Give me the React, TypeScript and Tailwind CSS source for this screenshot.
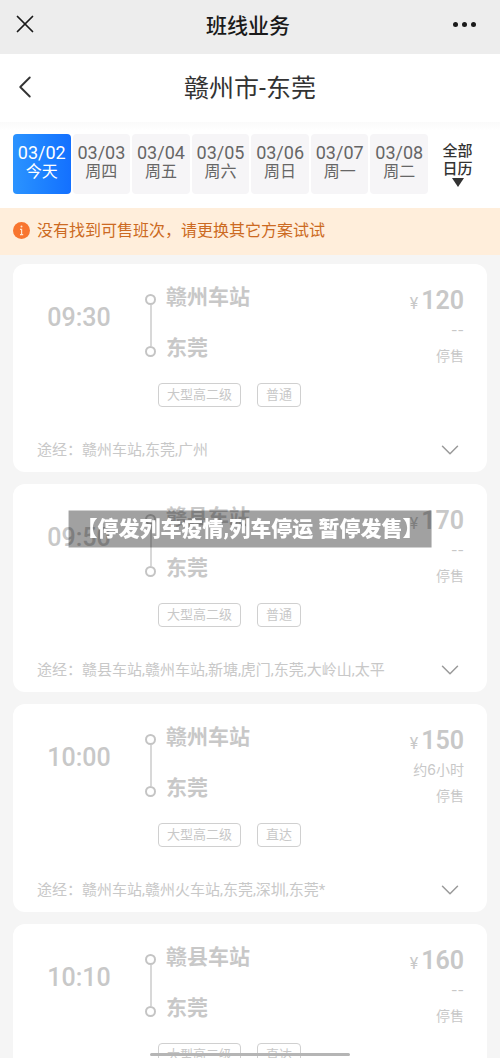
import { ChevronDown, ChevronLeft, X } from 'lucide-react';

type Trip = {
  time: string;
  from: string;
  to: string;
  price: number;
  duration: string;
  tags: string[];
  via: string;
};

const days = [
  { date: '03/02', label: '今天' },
  { date: '03/03', label: '周四' },
  { date: '03/04', label: '周五' },
  { date: '03/05', label: '周六' },
  { date: '03/06', label: '周日' },
  { date: '03/07', label: '周一' },
  { date: '03/08', label: '周二' },
];

const trips: Trip[] = [
  { time: '09:30', from: '赣州车站', to: '东莞', price: 120, duration: '--', tags: ['大型高二级', '普通'], via: '赣州车站,东莞,广州' },
  { time: '09:50', from: '赣县车站', to: '东莞', price: 170, duration: '--', tags: ['大型高二级', '普通'], via: '赣县车站,赣州车站,新塘,虎门,东莞,大岭山,太平' },
  { time: '10:00', from: '赣州车站', to: '东莞', price: 150, duration: '约6小时', tags: ['大型高二级', '直达'], via: '赣州车站,赣州火车站,东莞,深圳,东莞*' },
  { time: '10:10', from: '赣县车站', to: '东莞', price: 160, duration: '--', tags: ['大型高二级', '直达'], via: '赣县车站,东莞' },
];

function TripCard({ trip }: { trip: Trip }) {
  return (
    <article className="rounded-xl bg-white pt-5 pr-[23px] pb-3 pl-6 text-[#c8c8c8]">
      <div className="flex items-start">
        <time className="mt-5 w-[84px] text-center text-[25px] leading-7 font-medium">{trip.time}</time>
        <div className="mt-[10px] ml-6 flex h-[63px] w-[11px] flex-col items-center">
          <span className="size-[11px] rounded-full border-2 border-[#c4c4c4]" />
          <span className="w-[2px] flex-1 bg-[#d8d8d8]" />
          <span className="size-[11px] rounded-full border-2 border-[#c4c4c4]" />
        </div>
        <div className="ml-[10px] flex flex-1 flex-col gap-[25px] text-[21px] leading-[26px] font-bold">
          <span>{trip.from}</span>
          <span>{trip.to}</span>
        </div>
        <div className="flex flex-col items-end text-sm leading-[27px]">
          <p className="flex h-8 items-baseline gap-[3px] pt-[3px] leading-7">
            <span className="text-base">¥</span>
            <span className="text-[25px] font-semibold">{trip.price}</span>
          </p>
          <p className="font-[Inter,'Noto_Sans_CJK_SC',sans-serif]">{trip.duration}</p>
          <p>停售</p>
        </div>
      </div>
      <div className="mt-[13px] ml-[121px] flex gap-4">
        {trip.tags.map((tag) => (
          <span key={tag} className="h-6 rounded-sm border border-[#d0d0d0] px-2 text-[13px] leading-[22px]">{tag}</span>
        ))}
      </div>
      <div className="mt-[33px] flex items-center justify-between text-[15px] leading-5">
        <p>途经：{trip.via}</p>
        <button type="button" aria-label="展开途经站点" className="-my-[5px] -mr-[1px] text-[#9a9a9a]">
          <ChevronDown size={30} strokeWidth={1.2} />
        </button>
      </div>
    </article>
  );
}

export default function App() {
  return (
    <div className="h-screen overflow-hidden bg-[#f5f5f5] font-[Roboto,'Noto_Sans_CJK_SC',sans-serif]">
      <header className="grid h-[54px] grid-cols-3 items-center bg-[#ededed] px-[10px] text-[#1a1a1a]">
        <button type="button" aria-label="关闭" className="justify-self-start pb-[6px]">
          <X size={30} strokeWidth={1.4} />
        </button>
        <h1 className="pr-1 text-center text-[21px] font-medium">班线业务</h1>
        <button type="button" aria-label="更多" className="mr-[14px] flex gap-1 justify-self-end pb-[6px]">
          <span className="size-[5px] rounded-full bg-current" />
          <span className="size-[5px] rounded-full bg-current" />
          <span className="size-[5px] rounded-full bg-current" />
        </button>
      </header>

      <nav className="grid h-[68px] grid-cols-[38px_1fr_38px] items-center bg-white px-[6px] pb-[2px] text-[#333]">
        <button type="button" aria-label="返回">
          <ChevronLeft size={38} strokeWidth={1.2} />
        </button>
        <h2 className="pt-1 text-center text-[25px]">赣州市-东莞</h2>
      </nav>

      <section className="flex h-[86px] bg-linear-to-b from-[#fafafa] to-white to-10% px-[13px] pt-3">
        <div className="flex h-[60px] flex-1 gap-[2px]">
          {days.map((day, i) => (
            <button
              key={day.date}
              type="button"
              className={
                i === 0
                  ? 'flex-1 rounded-sm bg-linear-to-r from-[#2b93ff] to-[#1470ff] pb-1 text-white'
                  : 'flex-1 rounded-sm bg-[#f6f5f7] pb-1 text-[#666]'
              }
            >
              <span className="block text-lg leading-[19px]">{day.date}</span>
              <span className="block text-base leading-[19px]">{day.label}</span>
            </button>
          ))}
        </div>
        <button type="button" className="flex w-[59px] flex-col items-center pt-2 text-[15px] leading-[18px] font-medium text-[#333]">
          <span>全部</span>
          <span>日历</span>
          <svg viewBox="0 0 12 9" className="h-[9px] w-3" fill="currentColor"><path d="M0 0h12L6 9z" /></svg>
        </button>
      </section>

      <p className="flex h-[47px] items-center gap-[7px] bg-[#ffeedb] px-[13px] pb-[2px] text-base text-[#cc6a22]">
        <svg viewBox="0 0 17 17" className="size-[17px]">
          <circle cx="8.5" cy="8.5" r="8.5" fill="#f8752f" />
          <circle cx="8.5" cy="4.6" r="1" fill="#ffe3cc" />
          <path d="M7 7.3h1.6v5.2M7 12.7h3.2" fill="none" stroke="#ffe3cc" strokeWidth="1.2" />
        </svg>
        没有找到可售班次，请更换其它方案试试
      </p>

      <main className="flex flex-col gap-3 px-[13px] pt-[9px]">
        {trips.map((trip) => <TripCard key={trip.time} trip={trip} />)}
      </main>

      <div className="fixed top-1/2 left-1/2 -translate-1/2 bg-black/37 px-2 text-[21px] leading-[37px] font-black whitespace-nowrap text-white">
        【停发列车疫情,列车停运 暂停发售】
      </div>
      <div className="fixed bottom-[2px] left-1/2 h-[3px] w-[200px] -translate-x-1/2 rounded-full bg-[#b5b5b5]" />
    </div>
  );
}
